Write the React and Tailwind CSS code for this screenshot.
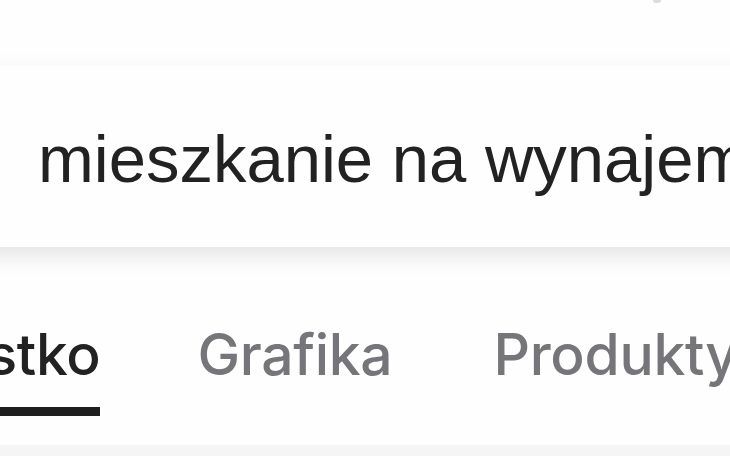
import React from "react";

const tabs = ["Wszystko", "Grafika", "Produkty"];

export default function App() {
  return (
    <div className="relative w-[730px] h-[456px] overflow-hidden bg-[#fefefe]">
      {/* cut-off icon at the top edge */}
      <div className="absolute left-[653px] -top-[3px] w-[8px] h-[6px] rounded-full bg-[#dcdcdc]" />

      <div className="h-[66px]" />

      {/* Search field, wider than the viewport so the shadow runs edge to edge */}
      <div className="relative z-10 -mx-[40px] h-[181px] bg-[#fefefe] shadow-[0_14px_22px_-6px_rgba(0,0,0,0.11),0_-6px_14px_rgba(0,0,0,0.018)] pt-[59px] pl-[78px]">
        <div
          className="whitespace-nowrap text-[67px] leading-[67px] text-[#222222]"
          style={{ fontFamily: '"Liberation Sans", Arial, sans-serif' }}
        >
          mieszkanie na wynajem
        </div>
      </div>

      {/* Tabs */}
      <div
        className="flex pt-[79px] -ml-[163px] bg-[#fefefe]"
        style={{ fontFamily: "Inter, sans-serif" }}
      >
        {tabs.map((t, i) => (
          <div
            key={t}
            className={`flex flex-col shrink-0 ${i === 1 ? "ml-[97px]" : ""} ${i === 2 ? "ml-[101px]" : ""}`}
          >
            <div
              className={`whitespace-nowrap text-[57px] leading-[57px] font-medium tracking-[-0.3px] ${
                i === 0 ? "text-[#222222]" : "text-[#75757a]"
              }`}
            >
              {t}
            </div>
            <div className={`mt-[24px] h-[9px] ${i === 0 ? "bg-[#1e1e1e]" : ""}`} />
          </div>
        ))}
      </div>

      <div className="mt-[29px] h-[20px] bg-[#f5f5f5]" />
    </div>
  );
}
